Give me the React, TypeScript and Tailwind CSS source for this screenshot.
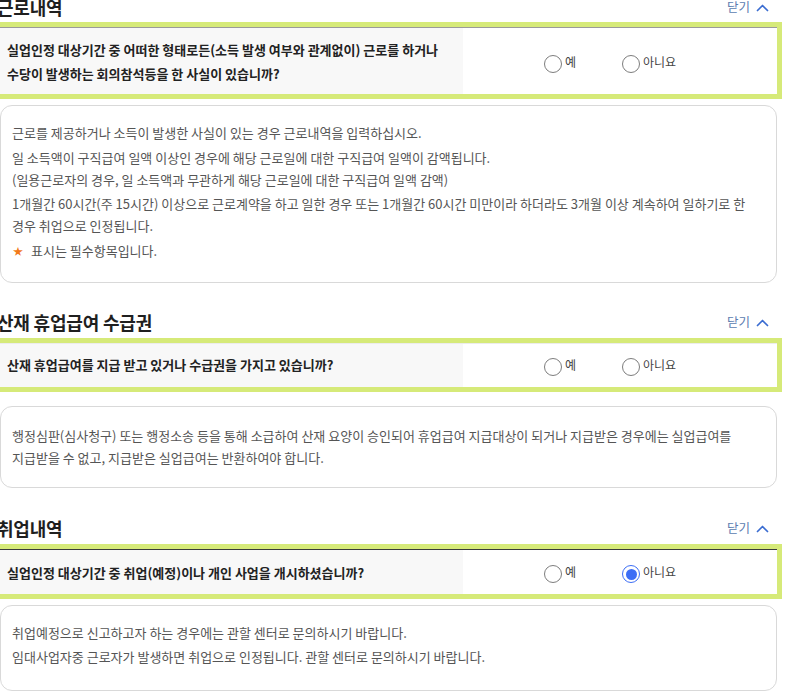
import React from "react";

const FONT = "font-['Noto_Sans_CJK_KR','Noto_Sans',sans-serif]";

function Chevron() {
  return (
    <svg width="13" height="9" viewBox="0 0 13 9" fill="none">
      <polyline points="1.5,7.5 6.5,2.5 11.5,7.5" stroke="#3a6cd1" strokeWidth="1.7" strokeLinecap="round" strokeLinejoin="round" />
    </svg>
  );
}

function Header({ title }: { title: string }) {
  return (
    <div className="flex h-[30px] items-center justify-between">
      <h2 className="ml-[-3px] text-[18px] font-semibold tracking-[-0.2px] text-[#1f1f1f]">{title}</h2>
      <button className="mr-[8px] flex items-center gap-[6px] text-[12.5px] text-[#5b7cb0]">
        <span>닫기</span>
        <Chevron />
      </button>
    </div>
  );
}

function Radio({ checked }: { checked?: boolean }) {
  if (checked) {
    return (
      <span className="flex h-[18px] w-[18px] items-center justify-center rounded-full border-[1.5px] border-[#3d6ef5] bg-white">
        <span className="h-[11px] w-[11px] rounded-full bg-[#3d6ef5]" />
      </span>
    );
  }
  return <span className="h-[18px] w-[18px] rounded-full border-[1.5px] border-[#7d7d7d] bg-white" />;
}

function Options({ no }: { no?: boolean }) {
  return (
    <div className="flex items-center pl-[81px]">
      <div className="flex w-[78px] items-center gap-[3px]">
        <Radio />
        <span className="mb-[4px] text-[12px] text-[#444]">예</span>
      </div>
      <div className="flex items-center gap-[3px]">
        <Radio checked={no} />
        <span className="mb-[4px] text-[12px] text-[#444]">아니요</span>
      </div>
    </div>
  );
}

export default function App() {
  return (
    <div className={`${FONT} min-h-[698px] w-[789px] overflow-hidden bg-white`}>
      <div className="w-[777px]">
        {/* Section 1 */}
        <div className="-mt-[8px]">
          <Header title="근로내역" />
          <div className="mt-[5px] flex h-[67px] border-t border-[#9a9a9a] outline-[5px] outline-solid outline-[#d6ea79]">
            <div className="flex w-[463px] items-center bg-[#f8f8f8] px-[7px] pt-[2px]">
              <p className="whitespace-nowrap text-[13px] font-bold leading-[24px] text-[#222]">
                실업인정 대상기간 중 어떠한 형태로든(소득 발생 여부와 관계없이) 근로를 하거나
                <br />
                수당이 발생하는 회의참석등을 한 사실이 있습니까?
              </p>
            </div>
            <div className="flex flex-1 items-center pt-[5px]">
              <Options />
            </div>
          </div>
          <div className="mt-[11px] flex flex-col gap-[2.5px] rounded-[12px] border border-[#d9d9d9] pb-[20px] pl-[11px] pr-[10px] pt-[16px] text-[13px] leading-[22px] text-[#555]">
            <p>근로를 제공하거나 소득이 발생한 사실이 있는 경우 근로내역을 입력하십시오.</p>
            <p>
              일 소득액이 구직급여 일액 이상인 경우에 해당 근로일에 대한 구직급여 일액이 감액됩니다.
              <br />
              (일용근로자의 경우, 일 소득액과 무관하게 해당 근로일에 대한 구직급여 일액 감액)
            </p>
            <p className="whitespace-nowrap">
              1개월간 60시간(주 15시간) 이상으로 근로계약을 하고 일한 경우 또는 1개월간 60시간 미만이라 하더라도 3개월 이상 계속하여 일하기로 한
              <br />
              경우 취업으로 인정됩니다.
            </p>
            <p className="flex items-center">
              <span className="ml-[1px] w-[18px] text-[10px] text-[#f27a1a]">★</span>
              <span>표시는 필수항목입니다.</span>
            </p>
          </div>
        </div>

        {/* Section 2 */}
        <div className="mt-[25px]">
          <Header title="산재 휴업급여 수급권" />
          <div className="mt-[5px] flex h-[44px] border-t border-[#ececec] outline-[5px] outline-solid outline-[#d6ea79]">
            <div className="flex w-[463px] items-center bg-[#f8f8f8] px-[7px]">
              <p className="text-[13px] font-bold leading-[24px] text-[#222]">산재 휴업급여를 지급 받고 있거나 수급권을 가지고 있습니까?</p>
            </div>
            <div className="flex flex-1 items-center pt-[3px]">
              <Options />
            </div>
          </div>
          <div className="mt-[19px] rounded-[12px] border border-[#d9d9d9] pb-[18px] pl-[11px] pr-[10px] pt-[18px] text-[13px] leading-[22px] text-[#555]">
            <p className="whitespace-nowrap">
              행정심판(심사청구) 또는 행정소송 등을 통해 소급하여 산재 요양이 승인되어 휴업급여 지급대상이 되거나 지급받은 경우에는 실업급여를
              <br />
              지급받을 수 없고, 지급받은 실업급여는 반환하여야 합니다.
            </p>
          </div>
        </div>

        {/* Section 3 */}
        <div className="mt-[26px]">
          <Header title="취업내역" />
          <div className="mt-[5px] flex h-[45px] border-t border-[#3a3a3a] outline-[5px] outline-solid outline-[#d6ea79]">
            <div className="flex w-[463px] items-center bg-[#f8f8f8] px-[7px] pt-[3px]">
              <p className="text-[13px] font-bold leading-[24px] text-[#222]">실업인정 대상기간 중 취업(예정)이나 개인 사업을 개시하셨습니까?</p>
            </div>
            <div className="flex flex-1 items-center pt-[5px]">
              <Options no />
            </div>
          </div>
          <div className="mt-[11px] flex flex-col gap-[2.5px] rounded-[12px] border border-[#d9d9d9] pb-[22px] pl-[11px] pr-[10px] pt-[16px] text-[13px] leading-[22px] text-[#555]">
            <p>취업예정으로 신고하고자 하는 경우에는 관할 센터로 문의하시기 바랍니다.</p>
            <p>임대사업자중 근로자가 발생하면 취업으로 인정됩니다. 관할 센터로 문의하시기 바랍니다.</p>
          </div>
        </div>
      </div>
    </div>
  );
}
